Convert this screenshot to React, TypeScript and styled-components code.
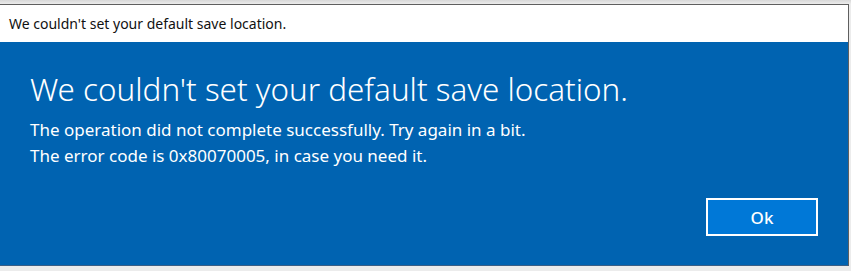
import React from "react";
import styled, { createGlobalStyle } from "styled-components";

const GlobalStyle = createGlobalStyle`
  html, body {
    margin: 0;
    padding: 0;
    background: #e4e4e4;
  }
  body {
    font-family: "Noto Sans", "Open Sans", sans-serif;
  }
`;

const Page = styled.div`
  width: 851px;
  height: 271px;
  padding-top: 4px;
  box-sizing: border-box;
  background: linear-gradient(#d8d8d8, #ececec 4px);
`;

const Window = styled.div`
  width: 849px;
  box-sizing: border-box;
  border-top: 1px solid #5f5f5f;
  border-right: 1px solid #5f5f5f;
  border-bottom: 1px solid #3a5f86;
  display: flex;
  flex-direction: column;
`;

const TitleBar = styled.div`
  height: 37px;
  background: #ffffff;
  display: flex;
  align-items: center;
  padding-left: 9px;
  font-size: 14px;
  color: #111;
`;

const Body = styled.div`
  height: 223px;
  background: #0063b1;
  color: #ffffff;
  padding: 26px 30px 0 30px;
  box-sizing: border-box;
  display: flex;
  flex-direction: column;
`;

const Heading = styled.h1`
  margin: 0;
  font-weight: 300;
  font-size: 31.4px;
  line-height: 42px;
`;

const Message = styled.p`
  margin: 7px 0 0 0;
  font-size: 17px;
  line-height: 26px;
`;

const Footer = styled.div`
  display: flex;
  justify-content: flex-end;
  margin-top: 29px;
`;

const Button = styled.button`
  width: 112px;
  height: 38px;
  border: 2px solid #ffffff;
  background: #0078d7;
  color: #ffffff;
  font-family: inherit;
  font-size: 17px;
  font-weight: 500;
  padding: 0;
`;

export default function App() {
  return (
    <>
      <GlobalStyle />
      <Page>
        <Window>
          <TitleBar>We couldn't set your default save location.</TitleBar>
          <Body>
            <Heading>We couldn't set your default save location.</Heading>
            <Message>
              The operation did not complete successfully. Try again in a bit.
              <br />
              The error code is 0x80070005, in case you need it.
            </Message>
            <Footer>
              <Button>Ok</Button>
            </Footer>
          </Body>
        </Window>
      </Page>
    </>
  );
}
